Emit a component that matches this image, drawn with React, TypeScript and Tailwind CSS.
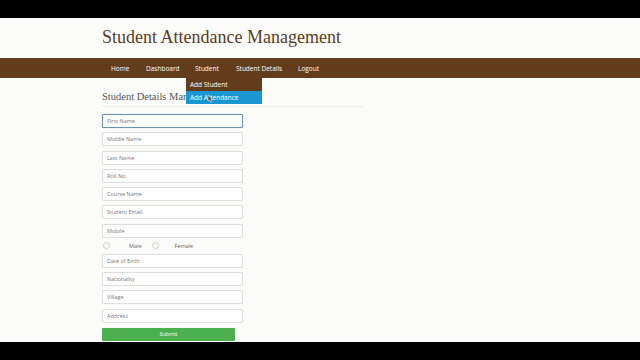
import React from "react"

const fields1 = ["Middle Name", "Last Name", "Roll No.", "Course Name", "Student Email", "Mobile"]
const fields2 = ["Date of Birth", "Nationality", "Village", "Address"]

function Field({ placeholder, focused }: { placeholder: string; focused?: boolean }) {
  return (
    <input
      placeholder={placeholder}
      className={
        "block w-[141px] h-[14px] px-[4px] text-[5.5px] bg-white outline-none placeholder:text-[#7a7a7a] rounded-[1px] " +
        (focused ? "border border-[#6e8fb8] shadow-[0_0_1px_#8fb0d8]" : "border border-[#dedede]")
      }
    />
  )
}

export default function App() {
  return (
    <div className="w-[640px] h-[360px] bg-black flex flex-col" style={{ fontFamily: "'Open Sans', 'Noto Sans', sans-serif" }}>
      <div className="h-[18px] shrink-0" />
      <div className="flex-1 bg-[#fcfdfb] flex flex-col">
        <div className="h-[40px] pl-[102px] pt-[8px]">
          <h1 className="text-[18px] leading-[22px] text-[#5b3b20]" style={{ fontFamily: "'Liberation Serif', serif" }}>
            Student Attendance Management
          </h1>
        </div>
        <nav className="h-[20px] bg-[#633c1b] flex items-center pl-[111px] pt-[1px] text-white text-[6.5px] relative">
          <span className="w-[35px]">Home</span>
          <span className="w-[49px]">Dashboard</span>
          <span className="w-[41px]">Student</span>
          <span className="w-[62px]">Student Details</span>
          <span>Logout</span>
          <div className="absolute left-[186px] top-[20px] w-[76px] z-10">
            <div className="h-[13px] bg-[#633c1b] pl-[4px] flex items-center">Add Student</div>
            <div className="h-[13px] bg-[#1a96d3] pl-[4px] flex items-center relative">
              Add Attendance
              <svg className="absolute left-[21px] top-[4px]" width="6" height="8" viewBox="0 0 6 8">
                <path d="M1 0 L1 6 L2.5 5 L3.5 7.5 L4.5 7 L3.5 4.8 L5.5 4.8 Z" fill="#444" stroke="#fff" strokeWidth="0.5" />
              </svg>
            </div>
          </div>
        </nav>
        <div className="pl-[102px] pt-[12px]">
          <div className="w-[261px] border-b border-[#eeeeee] pb-[2px]">
            <h2 className="text-[10.5px] leading-[14px] text-[#555]" style={{ fontFamily: "'Liberation Serif', serif" }}>
              Student Details Management
            </h2>
          </div>
          <div className="mt-[7px] flex flex-col gap-[4.3px]">
            <Field placeholder="First Name" focused />
            {fields1.map((f) => (
              <Field key={f} placeholder={f} />
            ))}
            <div className="flex items-center h-[7.4px] text-[5.5px] text-[#666]">
              <span className="ml-[1px] w-[7px] h-[7px] rounded-full border border-[#ccc] bg-white" />
              <span className="ml-[19px]">Male</span>
              <span className="ml-[11px] w-[7px] h-[7px] rounded-full border border-[#ccc] bg-white" />
              <span className="ml-[15px]">Female</span>
            </div>
            {fields2.map((f) => (
              <Field key={f} placeholder={f} />
            ))}
            <button className="mt-[0.7px] w-[133px] h-[13px] bg-[#4caf50] text-white text-[5.5px] rounded-[1px]">Submit</button>
          </div>
        </div>
      </div>
      <div className="h-[18px] shrink-0" />
    </div>
  )
}
